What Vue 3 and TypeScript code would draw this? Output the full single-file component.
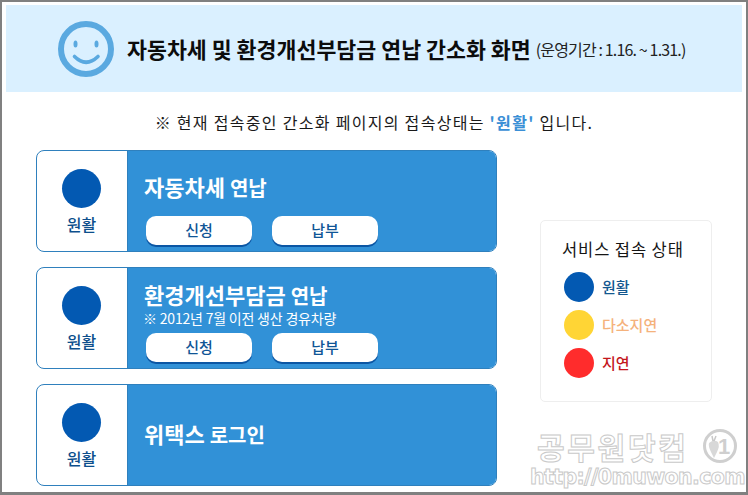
<script setup lang="ts">
interface Service {
  title: string
  note?: string
  actions: string[]
}

const services: Service[] = [
  { title: '자동차세', actions: ['신청', '납부'] },
  { title: '환경개선부담금', note: '※ 2012년 7월 이전 생산 경유차량', actions: ['신청', '납부'] },
  { title: '위택스', actions: [] },
]

const legend = [
  { label: '원활', tone: 'good' },
  { label: '다소지연', tone: 'slow' },
  { label: '지연', tone: 'late' },
]
</script>

<template>
  <div class="page">
    <header class="banner">
      <svg class="smile" width="58" height="58" viewBox="0 0 58 58">
        <circle cx="29" cy="29" r="25" fill="none" stroke="#5aa9e0" stroke-width="6" />
        <ellipse cx="18.5" cy="24" rx="2" ry="3.5" fill="#5aa9e0" />
        <ellipse cx="39.5" cy="24" rx="2" ry="3.5" fill="#5aa9e0" />
        <path d="M17.5 36.5 Q29 48 41 36.5" fill="none" stroke="#5aa9e0" stroke-width="3.6" stroke-linecap="round" />
      </svg>
      <h1>자동차세 및 환경개선부담금 연납 간소화 화면</h1>
      <span class="period">(운영기간 : 1.16. ~ 1.31.)</span>
    </header>

    <p class="notice">※ 현재 접속중인 간소화 페이지의 접속상태는 <b>'원활'</b> 입니다.</p>

    <main class="content">
      <section class="cards">
        <article v-for="item in services" :key="item.title" class="card">
          <div class="state">
            <i class="dot" />
            <span>원활</span>
          </div>
          <div class="body" :class="{ single: !item.actions.length, noted: item.note }">
            <h2 v-if="item.actions.length">{{ item.title }} <small>연납</small></h2>
            <h2 v-else>{{ item.title }} <small>로그인</small></h2>
            <p v-if="item.note" class="note">{{ item.note }}</p>
            <div v-if="item.actions.length" class="actions">
              <button v-for="a in item.actions" :key="a" type="button">{{ a }}</button>
            </div>
          </div>
        </article>
      </section>

      <aside class="legend">
        <h3>서비스 접속 상태</h3>
        <ul>
          <li v-for="row in legend" :key="row.label" :class="row.tone">
            <i />
            <span>{{ row.label }}</span>
          </li>
        </ul>
      </aside>
    </main>

    <div class="watermark">
      <div class="wm-top">
        <span>공무원닷컴</span>
        <svg width="36" height="36" viewBox="0 0 36 36">
          <circle cx="18" cy="18" r="15.5" fill="#fff" stroke="#cfcfcf" stroke-width="3" />
          <path d="M7 15 Q12 11 16 14 Q18 18 15 24 L12 30 L9 24 Q6 18 7 15Z" fill="#d8d8d8" />
          <path d="M11 13 L10 8 M12 13 L14 8" stroke="#c8c8c8" stroke-width="1.5" />
          <text x="16" y="26" class="wm-one">1</text>
        </svg>
      </div>
      <div class="wm-url">http://0muwon.com</div>
    </div>
  </div>
</template>

<style scoped>
.page {
  position: relative;
  box-sizing: border-box;
  width: 748px;
  height: 495px;
  overflow: hidden;
  padding: 3px 4px 0 4px;
  background: #fff;
  border-style: solid;
  border-color: #808080;
  border-width: 2px 2px 3px 2px;
  font-family: "Noto Sans CJK KR", "Noto Sans", sans-serif;
  color: #111;
}

.banner {
  display: flex;
  align-items: center;
  height: 87px;
  padding-left: 51px;
  background: #daf0ff;
}

.smile {
  flex: none;
  margin-right: 12px;
}

.banner h1 {
  margin: 0;
  font-size: 21.7px;
  line-height: 1;
  font-weight: 700;
  color: #0c0c0c;
  white-space: nowrap;
}

.period {
  margin-left: 5px;
  font-size: 16px;
  letter-spacing: -0.85px;
  color: #222;
  white-space: nowrap;
}

.notice {
  margin: 19px 0 0;
  height: 22px;
  font-size: 16px;
  line-height: 22px;
  letter-spacing: 1.3px;
  text-align: center;
  color: #1a1a1a;
  white-space: nowrap;
}

.notice b {
  color: #3a8fd6;
  font-weight: 700;
}

.content {
  display: flex;
  align-items: flex-start;
  margin-top: 17px;
  padding-left: 30px;
}

.cards {
  display: flex;
  flex-direction: column;
  gap: 15px;
  width: 461px;
}

.card {
  box-sizing: border-box;
  display: flex;
  height: 102px;
  border: 1px solid #2f80bd;
  border-radius: 8px;
  overflow: hidden;
  background: #fff;
}

.state {
  flex: none;
  width: 91px;
  display: flex;
  flex-direction: column;
  align-items: center;
  padding: 18px 1px 0 0;
  box-sizing: border-box;
  border-right: 1px solid #2f80bd;
  color: #0d4f8c;
  font-size: 16px;
  font-weight: 500;
}

.dot {
  display: block;
  width: 39px;
  height: 39px;
  border-radius: 50%;
  background: #0359b2;
  margin-bottom: 5px;
}

.state span {
  line-height: 22px;
}

.body {
  flex: 1;
  display: flex;
  flex-direction: column;
  background: #3191d7;
  padding-left: 16px;
  color: #fff;
}

.body h2 {
  margin: 0;
  font-size: 22px;
  line-height: 26px;
  font-weight: 700;
  padding-top: 22px;
  white-space: nowrap;
}

.body.noted h2 {
  padding-top: 13px;
}

.body h2 small {
  font-size: 20px;
  font-weight: 700;
}

.note {
  margin: 2px 0 0 -1px;
  font-size: 14px;
  line-height: 15px;
  letter-spacing: -0.2px;
  white-space: nowrap;
}

.body.single {
  justify-content: center;
  padding-bottom: 2px;
}

.body.single h2 {
  padding-top: 0;
}

.actions {
  display: flex;
  gap: 20px;
  margin-top: auto;
  margin-bottom: 6px;
  padding-left: 2px;
}

.actions button {
  box-sizing: border-box;
  width: 106px;
  height: 29px;
  padding: 0 0 2px;
  border: 0;
  border-radius: 10px;
  background: #fff;
  box-shadow: 0 2px 0 #0b56a4;
  font-family: inherit;
  font-size: 15px;
  font-weight: 500;
  color: #0f5596;
}

.legend {
  box-sizing: border-box;
  width: 172px;
  height: 182px;
  margin: 70px 0 0 43px;
  padding: 17px 0 0 23px;
  border: 1px solid #eeeeee;
  border-radius: 5px;
}

.legend h3 {
  margin: 0 0 12px -2px;
  font-size: 16.5px;
  line-height: 22px;
  font-weight: 400;
  color: #151515;
  letter-spacing: 0.9px;
  white-space: nowrap;
}

.legend ul {
  list-style: none;
  margin: 0;
  padding: 0;
  display: flex;
  flex-direction: column;
  gap: 8px;
}

.legend li {
  display: flex;
  align-items: center;
  gap: 8px;
  font-size: 15px;
  font-weight: 500;
}

.legend li span {
  padding-bottom: 2px;
}

.legend li i {
  display: block;
  width: 30px;
  height: 30px;
  border-radius: 50%;
}

.good i { background: #0359b2; }
.good span { color: #14588f; }
.slow i { background: #ffd535; }
.slow span { color: #f5b27c; }
.late i { background: #ff2c2c; }
.late span { color: #c4161c; }

.watermark {
  position: absolute;
  right: 0;
  bottom: 0;
  width: 216px;
  height: 64px;
  pointer-events: none;
}

.wm-top {
  display: flex;
  align-items: center;
  gap: 13px;
  padding-left: 7px;
}

.wm-top span {
  font-size: 30px;
  line-height: 36px;
  font-weight: 700;
  letter-spacing: 2.7px;
  color: #fff;
  -webkit-text-stroke: 1px #c9c9c9;
  white-space: nowrap;
}

.wm-one {
  font-family: "Liberation Sans", sans-serif;
  font-size: 22px;
  font-weight: 700;
  fill: #cfcfcf;
}

.wm-url {
  font-family: "DejaVu Sans", sans-serif;
  font-size: 20.5px;
  line-height: 26px;
  font-weight: 700;
  letter-spacing: -0.6px;
  color: #fff;
  -webkit-text-stroke: 1px #c9c9c9;
  white-space: nowrap;
}
</style>

<style>
html, body { margin: 0; background: #fff; }
</style>
